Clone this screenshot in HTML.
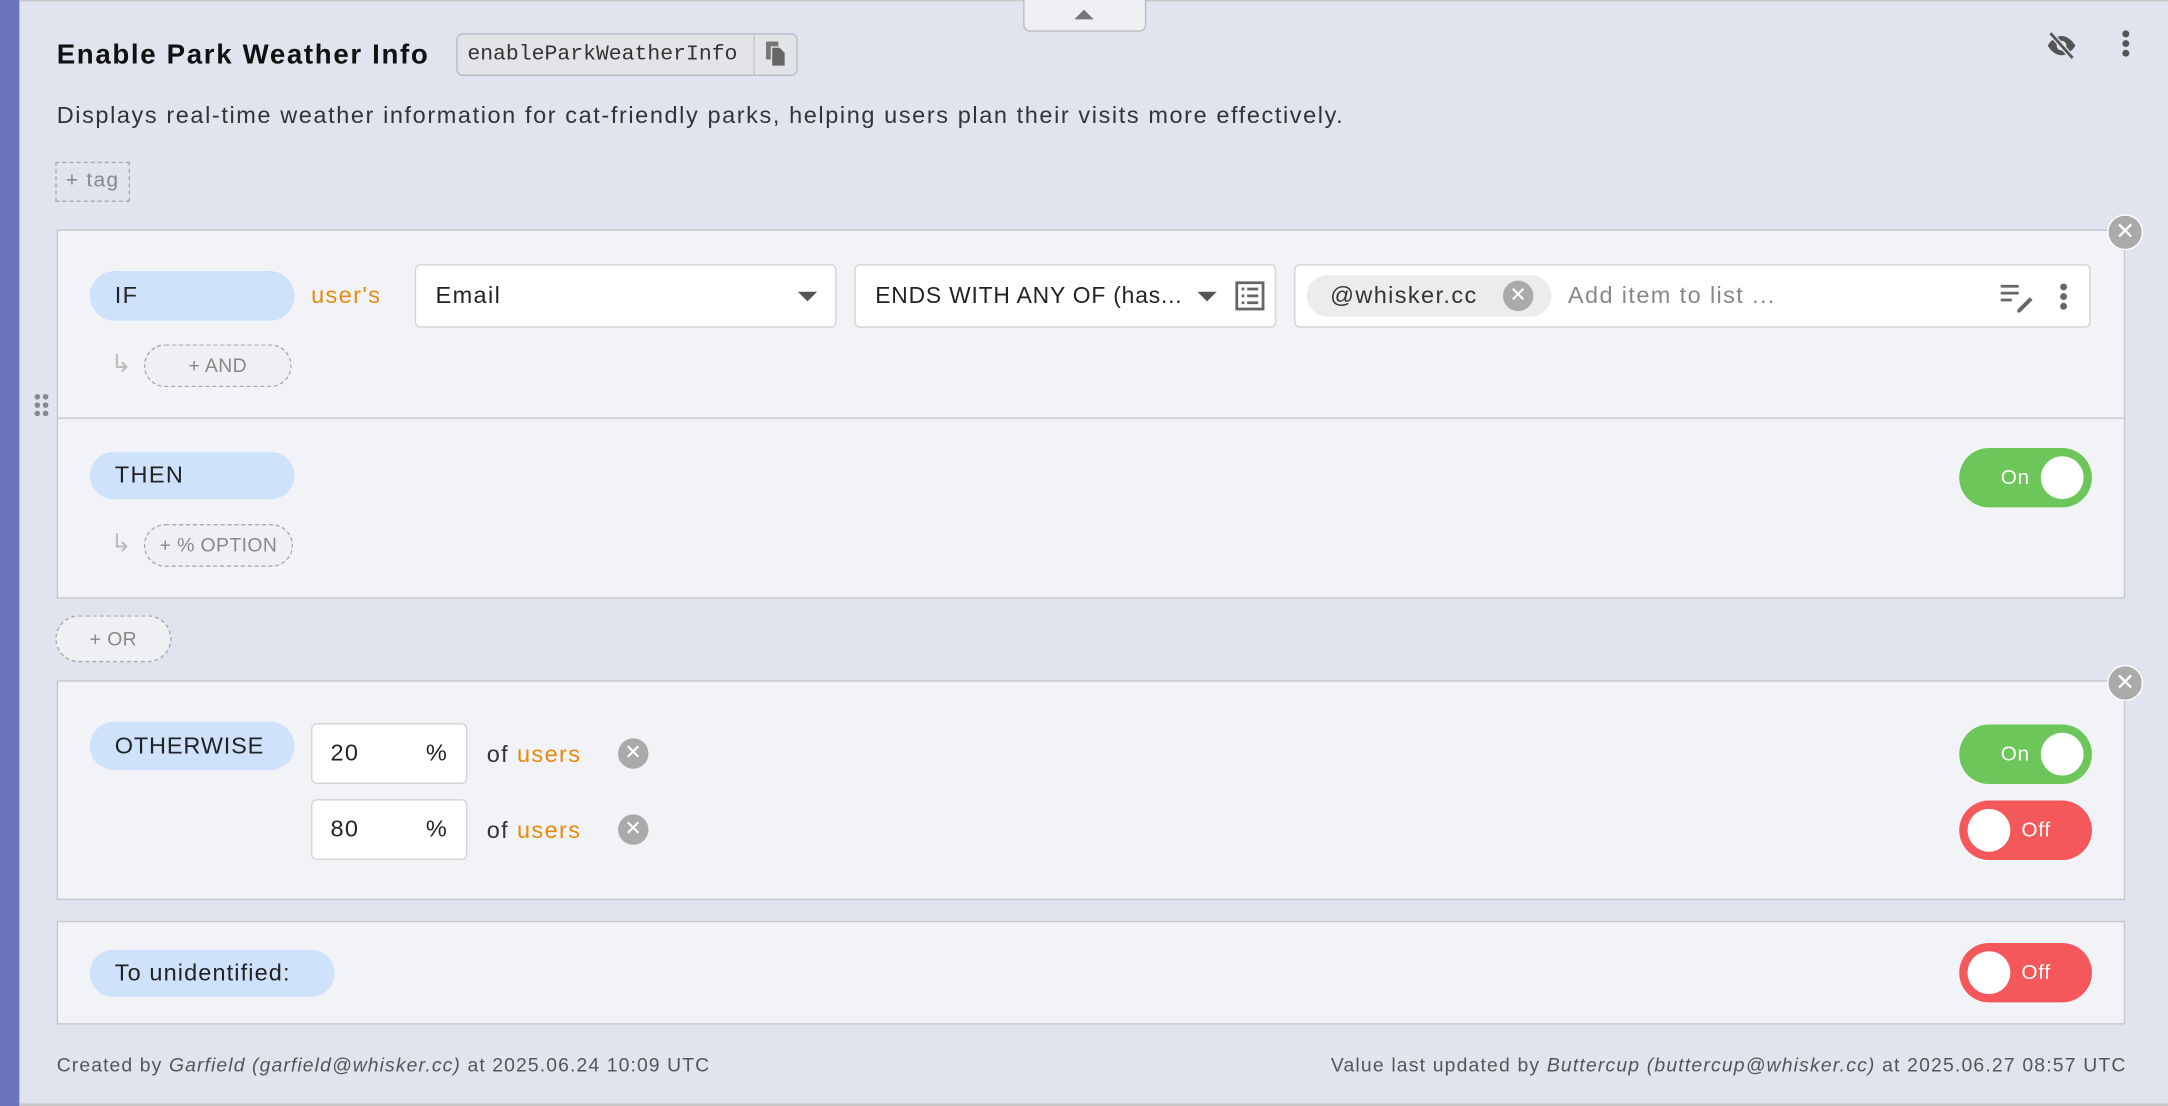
<!DOCTYPE html>
<html><head><meta charset="utf-8"><style>
html,body{margin:0;padding:0;width:2168px;height:1106px;overflow:hidden;background:#dfe4ef;}
#w{position:absolute;left:0;top:0;width:1568px;height:800px;transform:scale(1.38265);transform-origin:0 0;background:#dfe4ef;font-family:"Liberation Sans",sans-serif;color:#222;letter-spacing:1px;}
.a{position:absolute;}
.card{position:absolute;left:41px;width:1494px;background:#f2f3f7;border:1px solid #c6c7cb;}
.pill{position:absolute;background:#cfe2fb;border-radius:18px;font-size:17px;color:#222;box-sizing:border-box;padding-left:18px;}
.dash{position:absolute;border:1.5px dashed #aaa;border-radius:16px;font-size:14px;color:#888;box-sizing:border-box;text-align:center;background:#eef0f3;letter-spacing:0.3px;}
.sel{position:absolute;background:#fff;border:1px solid #d4d4d4;border-radius:4px;box-sizing:border-box;font-size:17px;}
.tog{position:absolute;width:96px;height:43px;border-radius:22px;letter-spacing:0.5px;}
.tog .k{position:absolute;top:6px;width:31px;height:31px;border-radius:50%;background:#fff;}
.tog span{position:absolute;top:13px;color:#fff;font-size:15px;}
.xc{position:absolute;width:22px;height:22px;border-radius:50%;background:#aaa;color:#fff;text-align:center;line-height:22px;font-size:15px;letter-spacing:0;}
.or{color:#e8890c;}
</style></head><body><div id="w">
<div class="a" style="left:0;top:0;width:14px;height:800px;background:#6a75bd"></div>
<div class="a" style="left:14px;top:0;width:1554px;height:1px;background:#c8c8c8"></div>
<div class="a" style="left:14px;top:798px;width:1554px;height:2px;background:#c8c8c8"></div>
<div class="a" style="left:740px;top:-1px;width:87px;height:22px;background:#eef0f4;border:1px solid #bbb;border-radius:0 0 5px 5px"></div>
<div class="a" style="left:777px;top:7px;width:0;height:0;border-left:7px solid transparent;border-right:7px solid transparent;border-bottom:7px solid #777"></div>

<div class="a" style="left:41px;top:29px;font-size:20px;font-weight:bold;color:#111;letter-spacing:1.2px">Enable Park Weather Info</div>
<div class="a" style="left:330px;top:24px;width:245px;height:29px;background:#e3e4e8;border:1px solid #b8bbc7;border-radius:5px"></div>
<div class="a" style="left:545px;top:25px;width:1px;height:29px;background:#c4c6cf"></div>
<div class="a" style="left:338px;top:30px;font-family:'Liberation Mono',monospace;font-size:15.5px;color:#333;letter-spacing:0">enableParkWeatherInfo</div>
<svg class="a" style="left:552px;top:29px" width="18" height="20" viewBox="0 0 18 20"><rect x="2" y="1" width="9" height="13" rx="1" fill="#777"/><path d="M6 5h6l4 4v10H6z" fill="#666" stroke="#e3e4e8" stroke-width="1"/></svg>
<div class="a" style="left:41px;top:74px;font-size:17px;color:#333;letter-spacing:1.15px">Displays real-time weather information for cat-friendly parks, helping users plan their visits more effectively.</div>
<div class="a" style="left:40px;top:117px;width:54px;height:29px;border:1.5px dashed #aaa;box-sizing:border-box;font-size:15px;color:#888;text-align:center;line-height:26px">+ tag</div>

<svg class="a" style="left:1479px;top:21px" width="24" height="24" viewBox="0 0 24 24"><path d="M2 12c3-5 7-7 10-7s7 2 10 7c-3 5-7 7-10 7s-7-2-10-7z" fill="#555"/><circle cx="12" cy="12" r="3.5" fill="#dfe4ef"/><path d="M4 3l16 18" stroke="#dfe4ef" stroke-width="4"/><path d="M4 3l16 18" stroke="#555" stroke-width="2"/></svg>
<div class="a" style="left:1535px;top:22px;width:5px;height:5px;border-radius:50%;background:#555;box-shadow:0 7px 0 #555,0 14px 0 #555"></div>

<!-- card 1 -->
<div class="card" style="top:166px;height:265px"></div>
<div class="a" style="left:42px;top:302px;width:1494px;height:1px;background:#c8c8cc"></div>
<div class="a" style="left:1524px;top:155px;width:24px;height:24px;border-radius:50%;background:#aaa;border:1.5px solid #fff;color:#fff;text-align:center;line-height:24px;font-size:17px;letter-spacing:0">✕</div>
<div class="a" style="left:25px;top:285px;width:4px;height:4px;border-radius:50%;background:#888;box-shadow:6px 0 #888,0 6px #888,6px 6px #888,0 12px #888,6px 12px #888"></div>
<div class="pill" style="left:65px;top:196px;width:148px;height:36px;line-height:36px">IF</div>
<div class="a or" style="left:225px;top:204px;font-size:17px">user's</div>
<div class="sel" style="left:300px;top:191px;width:305px;height:46px;line-height:44px;padding-left:14px">Email</div>
<div class="a" style="left:577px;top:211px;border-left:7px solid transparent;border-right:7px solid transparent;border-top:7px solid #555"></div>
<div class="sel" style="left:618px;top:191px;width:305px;height:46px;line-height:44px;padding-left:14px;font-size:16.5px;letter-spacing:0.6px">ENDS WITH ANY OF (has...</div>
<div class="a" style="left:866px;top:211px;border-left:7px solid transparent;border-right:7px solid transparent;border-top:7px solid #555"></div>
<svg class="a" style="left:893px;top:203px" width="22" height="22" viewBox="0 0 22 22"><rect x="1.5" y="1.5" width="19" height="19" fill="none" stroke="#666" stroke-width="2"/><path d="M5 6h2M9 6h8M5 11h2M9 11h8M5 16h2M9 16h8" stroke="#666" stroke-width="2"/></svg>
<div class="sel" style="left:936px;top:191px;width:576px;height:46px"></div>
<div class="a" style="left:945px;top:199px;width:177px;height:30px;border-radius:15px;background:#ececec"></div>
<div class="a" style="left:962px;top:204px;font-size:17px;color:#333">@whisker.cc</div>
<div class="xc" style="left:1087px;top:203px">✕</div>
<div class="a" style="left:1134px;top:204px;font-size:17px;color:#888">Add item to list ...</div>
<svg class="a" style="left:1446px;top:204px" width="26" height="22" viewBox="0 0 26 22"><path d="M1 3h13M1 8h13M1 13h8" stroke="#666" stroke-width="2"/><path d="M13 20l9-9 2 2-9 9h-2z" fill="#666"/></svg>
<div class="a" style="left:1490px;top:205px;width:5px;height:5px;border-radius:50%;background:#666;box-shadow:0 7px 0 #666,0 14px 0 #666"></div>
<div class="a" style="left:80px;top:253px;font-size:18px;color:#bbb">↳</div>
<div class="dash" style="left:104px;top:249px;width:107px;height:31px;line-height:29px">+ AND</div>

<div class="pill" style="left:65px;top:327px;width:148px;height:34px;line-height:34px">THEN</div>
<div class="a" style="left:80px;top:383px;font-size:18px;color:#bbb">↳</div>
<div class="dash" style="left:104px;top:379px;width:108px;height:31px;line-height:29px">+ % OPTION</div>
<div class="tog" style="left:1417px;top:324px;background:#6cc65a"><span style="left:30px">On</span><div class="k" style="left:59px"></div></div>

<div class="dash" style="left:40px;top:445px;width:84px;height:34px;line-height:32px;border-radius:17px">+ OR</div>

<!-- card 2 -->
<div class="card" style="top:492px;height:157px"></div>
<div class="a" style="left:1524px;top:481px;width:24px;height:24px;border-radius:50%;background:#aaa;border:1.5px solid #fff;color:#fff;text-align:center;line-height:24px;font-size:17px;letter-spacing:0">✕</div>
<div class="pill" style="left:65px;top:522px;width:148px;height:35px;line-height:35px;letter-spacing:0.6px">OTHERWISE</div>
<div class="sel" style="left:225px;top:523px;width:113px;height:44px;line-height:42px;padding-left:13px">20<span style="position:absolute;left:82px">%</span></div>
<div class="a" style="left:352px;top:536px;font-size:17px;color:#333">of <span class="or">users</span></div>
<div class="xc" style="left:447px;top:534px">✕</div>
<div class="sel" style="left:225px;top:578px;width:113px;height:44px;line-height:42px;padding-left:13px">80<span style="position:absolute;left:82px">%</span></div>
<div class="a" style="left:352px;top:591px;font-size:17px;color:#333">of <span class="or">users</span></div>
<div class="xc" style="left:447px;top:589px">✕</div>
<div class="tog" style="left:1417px;top:524px;background:#6cc65a"><span style="left:30px">On</span><div class="k" style="left:59px"></div></div>
<div class="tog" style="left:1417px;top:579px;background:#f5585a"><div class="k" style="left:6px"></div><span style="left:45px">Off</span></div>

<!-- card 3 -->
<div class="card" style="top:666px;height:73px"></div>
<div class="pill" style="left:65px;top:687px;width:177px;height:34px;line-height:34px;letter-spacing:0.8px">To unidentified:</div>
<div class="tog" style="left:1417px;top:682px;background:#f5585a"><div class="k" style="left:6px"></div><span style="left:45px">Off</span></div>

<div class="a" style="left:41px;top:762px;font-size:14px;color:#555;letter-spacing:0.8px">Created by <i>Garfield (garfield@whisker.cc)</i> at 2025.06.24 10:09 UTC</div>
<div class="a" style="right:30px;top:762px;font-size:14px;color:#555;letter-spacing:0.85px">Value last updated by <i>Buttercup (buttercup@whisker.cc)</i> at 2025.06.27 08:57 UTC</div>
</div></body></html>
